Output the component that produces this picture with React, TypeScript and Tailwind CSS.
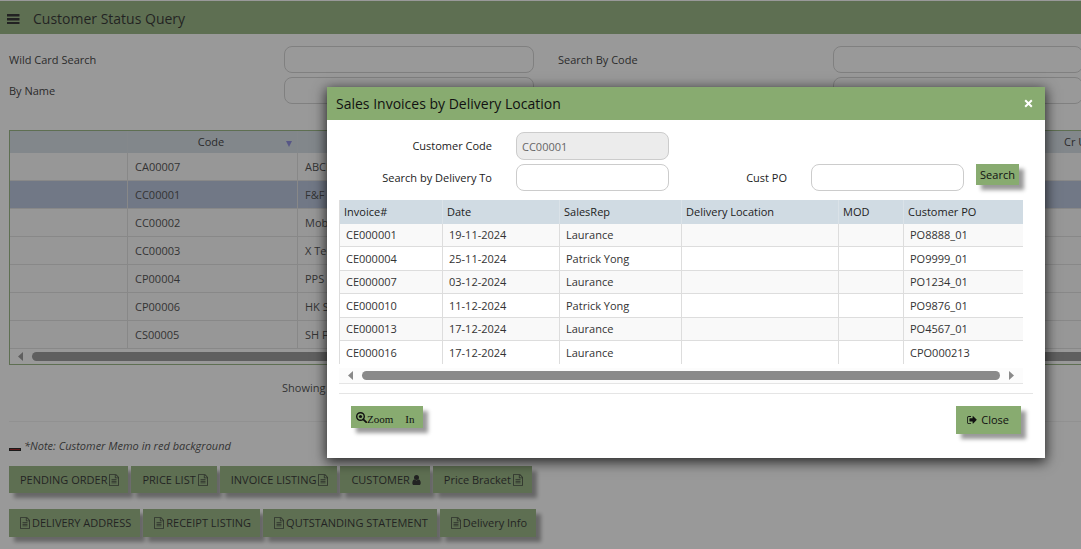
import type { ReactNode } from 'react';

const customers = [
  { code: 'CA00007', name: 'ABCD' },
  { code: 'CC00001', name: 'F&F', selected: true },
  { code: 'CC00002', name: 'Mob' },
  { code: 'CC00003', name: 'X Tec' },
  { code: 'CP00004', name: 'PPS' },
  { code: 'CP00006', name: 'HK S' },
  { code: 'CS00005', name: 'SH F' },
];

const invoices = [
  { no: 'CE000001', date: '19-11-2024', rep: 'Laurance', po: 'PO8888_01' },
  { no: 'CE000004', date: '25-11-2024', rep: 'Patrick Yong', po: 'PO9999_01' },
  { no: 'CE000007', date: '03-12-2024', rep: 'Laurance', po: 'PO1234_01' },
  { no: 'CE000010', date: '11-12-2024', rep: 'Patrick Yong', po: 'PO9876_01' },
  { no: 'CE000013', date: '17-12-2024', rep: 'Laurance', po: 'PO4567_01' },
  { no: 'CE000016', date: '17-12-2024', rep: 'Laurance', po: 'CPO000213' },
];

function FileIcon() {
  return (
    <svg viewBox="0 0 1536 1792" className="h-3 w-[10px] shrink-0 opacity-80" fill="currentColor" aria-hidden="true">
      <path d="M1468 380q28 28 48 76t20 88v1152q0 40-28 68t-68 28h-1344q-40 0-68-28t-28-68v-1600q0-40 28-68t68-28h896q40 0 88 20t76 48zM1024 136v376h376q-10-29-22-41l-313-313q-12-12-41-22zM1408 1664v-1024h-416q-40 0-68-28t-28-68v-416h-768v1536h1280zM384 800q0-14 9-23t23-9h704q14 0 23 9t9 23v64q0 14-9 23t-23 9h-704q-14 0-23-9t-9-23v-64zM1120 1024q14 0 23 9t9 23v64q0 14-9 23t-23 9h-704q-14 0-23-9t-9-23v-64q0-14 9-23t23-9h704zM1120 1280q14 0 23 9t9 23v64q0 14-9 23t-23 9h-704q-14 0-23-9t-9-23v-64q0-14 9-23t23-9h704z" />
    </svg>
  );
}

function UserIcon() {
  return (
    <svg viewBox="0 128 1280 1536" className="h-[10px] w-[9px] shrink-0" fill="currentColor" aria-hidden="true">
      <path d="M1280 1399q0 109-62.5 187t-150.5 78h-854q-88 0-150.5-78t-62.5-187q0-85 8.5-160.5t31.5-152 58.5-131 94-89 134.5-34.5q131 128 313 128t313-128q76 0 134.5 34.5t94 89 58.5 131 31.5 152 8.5 160.5z" />
      <circle cx="640" cy="512" r="384" />
    </svg>
  );
}

function SignOutIcon() {
  return (
    <svg viewBox="0 240 1600 1300" className="h-2 w-[10px] shrink-0" fill="currentColor" aria-hidden="true">
      <path d="M640 1440q0 4 1 20t.5 26.5-3 23.5-10 19.5-20.5 6.5h-320q-119 0-203.5-84.5t-84.5-203.5v-704q0-119 84.5-203.5t203.5-84.5h320q13 0 22.5 9.5t9.5 22.5q0 4 1 20t.5 26.5-3 23.5-10 19.5-20.5 6.5h-320q-66 0-113 47t-47 113v704q0 66 47 113t113 47h312l11.5 1 11.5 3 8 5.5 7 9 2 13.5zM1568 864q0 26-19 45l-544 544q-19 19-45 19t-45-19-19-45v-288h-448q-26 0-45-19t-19-45v-384q0-26 19-45t45-19h448v-288q0-26 19-45t45-19 45 19l544 544q19 19 19 45z" />
    </svg>
  );
}

function ZoomIcon() {
  return (
    <svg viewBox="0 0 11 11" className="h-[11px] w-[11px] shrink-0" fill="none" stroke="currentColor" aria-hidden="true">
      <circle cx="4.5" cy="4.5" r="3.8" strokeWidth="1.4" />
      <circle cx="4.5" cy="4.5" r="1.6" fill="currentColor" stroke="none" />
      <path d="M7.3 7.3L10.2 10.2" strokeWidth="1.8" strokeLinecap="round" />
    </svg>
  );
}

function Arrow({ dir }: { dir: 'left' | 'right' }) {
  return (
    <svg viewBox="0 0 5 9" className="h-[9px] w-[5px] shrink-0" fill="#8a8a8a" aria-hidden="true">
      {dir === 'left' ? <path d="M5 0v9L0 4.5z" /> : <path d="M0 0v9l5-4.5z" />}
    </svg>
  );
}

function ActionButton({ children, tall }: { children: ReactNode; tall?: boolean }) {
  return (
    <button
      type="button"
      className={`flex items-center gap-[2px] bg-[#88ab70] pr-[9px] pl-[11px] whitespace-nowrap text-[#111] shadow-[5px_5px_4px_rgba(0,0,0,0.4)] ${
        tall ? 'h-7' : 'h-[27px]'
      }`}
    >
      {children}
    </button>
  );
}

function SearchField({ id, label }: { id: string; label: string }) {
  return (
    <>
      <label htmlFor={id} className="font-medium text-[#222]">{label}</label>
      <div className="pr-6">
        <input id={id} type="text" className="block h-[27px] w-full rounded-lg border border-[#ccc] bg-white px-[5px]" />
      </div>
    </>
  );
}

function CustomerPage() {
  return (
    <div className="pt-px">
      <header className="flex h-[33px] items-center bg-[#88ab70] pt-[2px] pl-[7px]">
        <button type="button" aria-label="Menu" className="text-[#111]">
          <svg viewBox="0 0 13 10" className="h-[10px] w-[13px]" fill="currentColor" aria-hidden="true">
            <path d="M0 0h12.5v2.5H0zM0 4h12.5v2.5H0zM0 8h12.5v2H0z" />
          </svg>
        </button>
        <h1 className="ml-[13px] text-sm text-[#111]">Customer Status Query</h1>
      </header>

      <div className="-mr-[26px] grid grid-cols-4 items-center gap-y-1 pt-3 pl-[9px]">
        <SearchField id="wild" label="Wild Card Search" />
        <SearchField id="code" label="Search By Code" />
        <SearchField id="name" label="By Name" />
        <SearchField id="status" label="" />
      </div>

      <main className="pt-[26px] pl-[9px]">
        <div className="border-y border-l border-[#88ab70]">
          <table className="w-full table-fixed border-separate border-spacing-0">
            <colgroup>
              <col className="w-[118px]" />
              <col className="w-[170px]" />
              <col />
              <col className="w-[26px]" />
            </colgroup>
            <thead>
              <tr className="h-[22px] bg-[#d0dbe3]">
                <th className="border-r border-[#d5dde3]" />
                <th className="border-r border-[#d5dde3] font-medium text-[#222]">
                  <div className="flex items-center pr-[5px]">
                    <span className="flex-1 pl-2">Code</span>
                    <svg viewBox="0 0 6 6" className="mt-1 h-[6px] w-[6px]" fill="#7b7bd8" aria-hidden="true">
                      <path d="M0 0h6L3 6z" />
                    </svg>
                  </div>
                </th>
                <th />
                <th className="overflow-hidden text-left font-medium whitespace-nowrap text-[#222] pl-[9px]">Cr U</th>
              </tr>
            </thead>
            <tbody>
              {customers.map((c) => (
                <tr key={c.code} className={`h-7 ${c.selected ? 'bg-[#afbdd8]' : 'bg-[#fafafa]'}`}>
                  <td className="border-r border-b border-[#ddd]" />
                  <td className="border-r border-b border-[#ddd] pl-[7px]">{c.code}</td>
                  <td className="border-b border-[#ddd] pl-[7px]">{c.name}</td>
                  <td className="border-b border-[#ddd]" />
                </tr>
              ))}
            </tbody>
          </table>
          <div className="flex h-[15px] items-center gap-[9px] overflow-hidden pl-2">
            <Arrow dir="left" />
            <div className="-mr-2 h-[9px] flex-1 rounded-l-full bg-[#8a8a8a]" />
          </div>
        </div>

        <p className="pt-[13px] pl-[273px] leading-5">Showing</p>
        <hr className="mt-[23px] border-[#eee]" />

        <p className="mt-4 flex items-center gap-[3px] leading-4 italic">
          <span className="mt-[6px] h-[3px] w-3 border border-black bg-[#900000]" />
          *Note: Customer Memo in red background
        </p>
        <div className="mt-3 flex gap-[3px]">
          <ActionButton>PENDING ORDER <FileIcon /></ActionButton>
          <ActionButton>PRICE LIST <FileIcon /></ActionButton>
          <ActionButton>INVOICE LISTING <FileIcon /></ActionButton>
          <ActionButton>CUSTOMER <UserIcon /></ActionButton>
          <ActionButton>Price Bracket <FileIcon /></ActionButton>
        </div>
        <div className="mt-4 flex gap-[3px]">
          <ActionButton tall><FileIcon /> DELIVERY ADDRESS</ActionButton>
          <ActionButton tall><FileIcon /> RECEIPT LISTING</ActionButton>
          <ActionButton tall><FileIcon /> QUTSTANDING STATEMENT</ActionButton>
          <ActionButton tall><FileIcon /> Delivery Info</ActionButton>
        </div>
      </main>
    </div>
  );
}

function InvoiceDialog() {
  return (
    <div role="dialog" aria-labelledby="dialog-title" className="w-full max-w-[718px] bg-white shadow-[0_3px_12px_1px_rgba(0,0,0,0.75)]">
      <div className="flex h-[33px] items-center justify-between bg-[#88ab70] pr-3 pl-[9px]">
        <h2 id="dialog-title" className="text-sm text-[#111]">Sales Invoices by Delivery Location</h2>
        <button type="button" aria-label="Close dialog" className="text-white">
          <svg viewBox="0 0 9 9" className="h-[9px] w-[9px]" fill="none" stroke="currentColor" strokeWidth="2" aria-hidden="true">
            <path d="M1.2 1.2l6.6 6.6M7.8 1.2L1.2 7.8" />
          </svg>
        </button>
      </div>

      <div className="pt-3 pr-3 pl-3">
        <div className="grid grid-cols-[153px_153px_94px_153px_auto] items-center gap-x-6 gap-y-1">
          <label htmlFor="cust" className="text-right font-medium text-[#222]">Customer Code</label>
          <input id="cust" type="text" readOnly value="CC00001" className="h-7 w-full rounded-lg border border-[#ccc] bg-[#ececec] px-[5px] text-[#666]" />
          <span className="col-span-3" />
          <label htmlFor="delivery" className="text-right font-medium text-[#222]">Search by Delivery To</label>
          <input id="delivery" type="text" className="h-[27px] w-full rounded-lg border border-[#ccc] px-[5px]" />
          <label htmlFor="po" className="text-right font-medium text-[#222]">Cust PO</label>
          <input id="po" type="text" className="h-[27px] w-full rounded-lg border border-[#ccc] px-[5px]" />
          <button type="button" className="-ml-3 h-[21px] w-[43px] self-start bg-[#88ab70] text-[#111] shadow-[5px_5px_4px_rgba(0,0,0,0.4)]">
            Search
          </button>
        </div>

        <div className="mt-[9px] mr-[10px] border-b border-[#e5e5e5]">
          <table className="w-full table-fixed border-separate border-spacing-0 border-l border-[#ddd]">
            <colgroup>
              <col className="w-[103px]" />
              <col className="w-[117px]" />
              <col className="w-[122px]" />
              <col className="w-[157px]" />
              <col className="w-[65px]" />
              <col />
            </colgroup>
            <thead>
              <tr className="h-6 bg-[#d0dbe3] text-left text-[#222]">
                {['Invoice#', 'Date', 'SalesRep', 'Delivery Location', 'MOD', 'Customer PO'].map((h) => (
                  <th key={h} className="border-r border-[#dae2e8] pl-1 font-medium last:border-r-0">{h}</th>
                ))}
              </tr>
            </thead>
            <tbody>
              {invoices.map((r) => (
                <tr
                  key={r.no}
                  className="h-[23px] odd:bg-[#f9f9f9] not-last:even:h-6 [&>td]:border-r [&>td]:border-b [&>td]:border-[#ddd] [&>td]:pl-[6px] [&>td:last-child]:border-r-0 last:[&>td]:border-b-0"
                >
                  <td>{r.no}</td>
                  <td>{r.date}</td>
                  <td>{r.rep}</td>
                  <td />
                  <td />
                  <td>{r.po}</td>
                </tr>
              ))}
            </tbody>
          </table>
          <div className="mt-1 flex h-[15px] items-center gap-[9px] bg-[#fcfcfc] px-[9px]">
            <Arrow dir="left" />
            <div className="h-[9px] flex-1 rounded-full bg-[#8a8a8a]" />
            <Arrow dir="right" />
          </div>
        </div>
      </div>

      <div className="mx-3 mt-[9px] flex items-start justify-between border-t border-[#e5e5e5] px-3 pt-3 pb-6">
        <button
          type="button"
          className="flex h-[22px] items-center bg-[#88ab70] px-[5px] font-['Liberation_Serif',serif] text-[#111] shadow-[5px_5px_4px_rgba(0,0,0,0.4)]"
        >
          <ZoomIcon />
          <span className="mt-1 flex gap-3 pr-1">
            <span>Zoom</span>
            <span>In</span>
          </span>
        </button>
        <button type="button" className="flex h-7 items-center gap-1 bg-[#88ab70] pr-3 pl-[11px] text-[#111] shadow-[5px_5px_4px_rgba(0,0,0,0.4)]">
          <SignOutIcon />
          Close
        </button>
      </div>
    </div>
  );
}

export default function App() {
  return (
    <div className="relative h-screen overflow-hidden bg-white font-['Open_Sans','Noto_Sans',sans-serif] text-[11px] leading-4 text-[#333]">
      <CustomerPage />
      {/* Modal layer */}
      <div className="absolute inset-0 bg-[#333]/50" />
      <div className="absolute inset-0 flex items-start justify-end pt-[87px] pr-9">
        <InvoiceDialog />
      </div>
    </div>
  );
}
